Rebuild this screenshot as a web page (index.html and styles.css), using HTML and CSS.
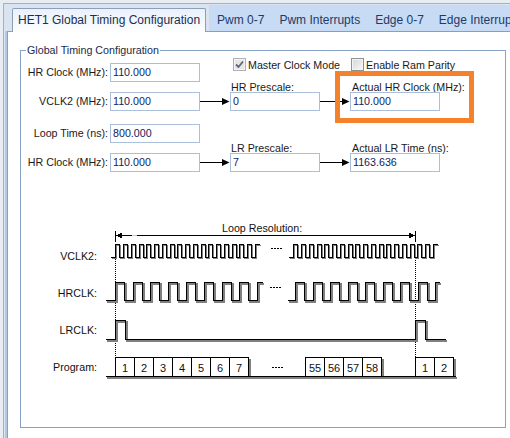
FILE: index.html
```html
<!DOCTYPE html>
<html lang="en">
<head>
    <meta charset="UTF-8">
    <title>HET1 Global Timing Configuration</title>
    <link rel="stylesheet" href="styles.css">
</head>
<body>
    <div class="window">
        <div class="tabs">
            <div class="tab active">HET1 Global Timing Configuration</div>
            <div class="tab">Pwm 0-7</div>
            <div class="tab">Pwm Interrupts</div>
            <div class="tab">Edge 0-7</div>
            <div class="tab">Edge Interrupts</div>
        </div>

        <div class="panel">
            <fieldset class="group">
                <legend>Global Timing Configuration</legend>

                <div class="form-grid">
                    <label class="field-label r1">HR Clock (MHz):</label>
                    <div class="textbox r1 c2">110.000</div>
                    <div class="checks">
                        <span class="check checked">
                            <svg width="11" height="11" viewBox="0 0 11 11"><path d="M2 5.5 L4.5 8 L9 2.5" /></svg>
                        </span>
                        <span class="check-text">Master Clock Mode</span>
                        <span class="check"></span>
                        <span class="check-text">Enable Ram Parity</span>
                    </div>

                    <label class="sub-label r2 c4">HR Prescale:</label>
                    <label class="sub-label wide r2 c6">Actual HR Clock (MHz):</label>

                    <label class="field-label r3">VCLK2 (MHz):</label>
                    <div class="textbox r3 c2">110.000</div>
                    <svg class="arrow r3 c3" width="30" height="19"><path d="M0 9.5 H23" /><polygon points="22,6 29.5,9.5 22,13" /></svg>
                    <div class="textbox r3 c4">0</div>
                    <svg class="arrow r3 c5" width="30" height="19"><path d="M0 9.5 H23" /><polygon points="22,6 29.5,9.5 22,13" /></svg>
                    <div class="textbox r3 c6">110.000</div>

                    <label class="field-label r5">Loop Time (ns):</label>
                    <div class="textbox r5 c2">800.000</div>

                    <label class="sub-label r6 c4">LR Prescale:</label>
                    <label class="sub-label wide r6 c6">Actual LR Time (ns):</label>

                    <label class="field-label r7">HR Clock (MHz):</label>
                    <div class="textbox r7 c2">110.000</div>
                    <svg class="arrow r7 c3" width="30" height="19"><path d="M0 9.5 H23" /><polygon points="22,6 29.5,9.5 22,13" /></svg>
                    <div class="textbox r7 c4">7</div>
                    <svg class="arrow r7 c5" width="30" height="19"><path d="M0 9.5 H23" /><polygon points="22,6 29.5,9.5 22,13" /></svg>
                    <div class="textbox r7 c6">1163.636</div>

                    <div class="highlight"></div>
                </div>

                <!-- timing diagram, drawn in panel coordinates -->
                <svg class="timing" width="483" height="255" viewBox="21 172 483 255" shape-rendering="crispEdges">
                    <defs>
                        <path id="vclk-a" d="M110.5,257.5h5v-13h4v13h4v-13h4v13h4v-13h4v13h4v-13h4v13h3v-13h4v13h4v-13h4v13h4v-13h4v13h4v-13h4v13h3v-13h4v13h4v-13h4v13h4v-13h4v13h4v-13h4v13h3v-13h4v13h4v-13h4v13h4v-13h4v13h4v-13h4v13h3v-13h4v13h4v-13h4v13h4v-13h4" />
                        <path id="vclk-b" d="M288.5,257.5h5v-13h4v13h4v-13h4v13h4v-13h4v13h4v-13h4v13h3v-13h4v13h4v-13h4v13h4v-13h4v13h4v-13h4v13h3v-13h4v13h4v-13h4v13h4v-13h4v13h4v-13h4v13h3v-13h4v13h4v-13h4v13h4v-13h4v13h4v-13h4v13h3v-13h4v13h4v-13h4v13h4v-13h4" />
                        <path id="hrclk-a" d="M105.5,300.5h10v-18h9v18h9v-18h9v18h8v-18h9v18h9v-18h9v18h9v-18h9v18h9v-18h9v18h9v-18h9v18h8v-18h9v18h9v-18h5" />
                        <path id="hrclk-b" d="M287.5,300.5h8v-18h9v18h9v-18h9v18h8v-18h9v18h9v-18h9v18h8v-18h9v18h9v-18h9v18h8v-18h9v18h9v-18h9v18h8v-18h4" />
                        <path id="lrclk" d="M105.5,339.5h10v-19h10v19h290v-19h10v19h20" />
                        <path id="program" d="M105.5,376.5H455.5" />
                    </defs>

                    <!-- loop resolution span -->
                    <text class="caption" x="222" y="232">Loop Resolution:</text>
                    <path class="line" d="M115.5,235.5H415.5 M115.5,231V242 M415.5,231V242" />
                    <path class="line faint" d="M132,235.5h5" />
                    <polygon class="head" points="116,235.5 122,232.5 122,238.5" />
                    <polygon class="head" points="415,235.5 409,232.5 409,238.5" />

                    <path class="dotted" d="M115.5,259V357 M415.5,260V357" />

                    <!-- drop shadows -->
                    <use href="#vclk-a" class="shadow thin" transform="translate(1 1)" />
                    <use href="#vclk-b" class="shadow thin" transform="translate(1 1)" />
                    <use href="#hrclk-a" class="shadow" transform="translate(1.5 1.5)" />
                    <use href="#hrclk-b" class="shadow" transform="translate(1.5 1.5)" />
                    <use href="#lrclk" class="shadow" transform="translate(1.5 1.5)" />
                    <use href="#program" class="shadow" transform="translate(1.5 1.5)" />
                    <rect class="slot-shadow" x="117" y="359" width="134" height="20" />
                    <rect class="slot-shadow" x="307" y="359" width="77" height="20" />
                    <rect class="slot-shadow" x="417" y="359" width="39" height="20" />

                    <use href="#vclk-a" class="wave" />
                    <use href="#vclk-b" class="wave" />
                    <use href="#hrclk-a" class="wave" />
                    <use href="#hrclk-b" class="wave" />
                    <use href="#lrclk" class="wave" />
                    <use href="#program" class="wave" />

                    <path class="dash" d="M271,248.5h11 M270,287.5h11 M272,367.5h11" />

                    <g class="slots">
                        <rect x="115.5" y="357.5" width="19" height="19" />
                        <rect x="134.5" y="357.5" width="19" height="19" />
                        <rect x="153.5" y="357.5" width="19" height="19" />
                        <rect x="172.5" y="357.5" width="19" height="19" />
                        <rect x="191.5" y="357.5" width="19" height="19" />
                        <rect x="210.5" y="357.5" width="19" height="19" />
                        <rect x="229.5" y="357.5" width="19" height="19" />
                        <rect x="305.5" y="357.5" width="19" height="19" />
                        <rect x="324.5" y="357.5" width="19" height="19" />
                        <rect x="343.5" y="357.5" width="19" height="19" />
                        <rect x="362.5" y="357.5" width="19" height="19" />
                        <rect x="415.5" y="357.5" width="19" height="19" />
                        <rect x="434.5" y="357.5" width="19" height="19" />
                    </g>

                    <g class="slot-text">
                        <text x="125" y="372">1</text>
                        <text x="144" y="372">2</text>
                        <text x="163" y="372">3</text>
                        <text x="182" y="372">4</text>
                        <text x="201" y="372">5</text>
                        <text x="220" y="372">6</text>
                        <text x="239" y="372">7</text>
                        <text x="315" y="372">55</text>
                        <text x="334" y="372">56</text>
                        <text x="353" y="372">57</text>
                        <text x="372" y="372">58</text>
                        <text x="425" y="372">1</text>
                        <text x="444" y="372">2</text>
                    </g>

                    <g class="signal-name">
                        <text x="97" y="260">VCLK2:</text>
                        <text x="97" y="297">HRCLK:</text>
                        <text x="97" y="334">LRCLK:</text>
                        <text x="97" y="371">Program:</text>
                    </g>
                </svg>
            </fieldset>
        </div>
    </div>
</body>
</html>
```

FILE: styles.css
```css
body {
    margin: 0;
    background-color: #e8edf3;
    font-family: "Liberation Sans", Arial, sans-serif;
}

.window {
    box-sizing: border-box;
    width: 507px;
    height: 435px;
    margin: 3px 0 0 3px;
    border-top: 1px solid #a1b1c6;
    border-left: 1px solid #a1b1c6;
    background-color: #dae4f1;
    display: flex;
    flex-direction: column;
    overflow: hidden;
}

/* tab strip */

.tabs {
    display: flex;
    align-items: flex-end;
    flex-shrink: 0;
    height: 27px;
    padding-left: 8px;
    white-space: nowrap;
}

.tab {
    box-sizing: border-box;
    height: 26px;
    padding: 8px 7px 0 8px;
    background-color: #c7dbf5;
    color: #1e3a66;
    font-size: 12px;
    line-height: 14px;
}

.tab.active {
    position: relative;
    z-index: 1;
    height: 24px;
    margin-bottom: -1px;
    padding: 4px 5px 0;
    border: 1px solid #8c9fba;
    border-bottom: none;
    border-radius: 2px 2px 0 0;
    background: linear-gradient(#e9f1fb, #fdfeff);
    color: #1b2f52;
}

.tab.active + .tab {
    margin-left: 3px;
}

.panel {
    flex: 1;
    margin-left: 3px;
    border-top: 1px solid #8c9fba;
    border-left: 1px solid #8c9fba;
    background-color: #fff;
    box-shadow: -2px 0 0 #b3c8e4;
}

/* group box */

.group {
    box-sizing: border-box;
    width: 486px;
    min-width: 0;
    margin: 12px 0 0 12px;
    padding: 0;
    border: 1px solid #88a3ca;
}

.group legend {
    margin-left: 5px;
    padding: 0 1px;
    font-size: 10.7px;
    line-height: 13px;
    color: #1b2a47;
}

.form-grid {
    position: relative;
    display: grid;
    grid-template-columns: 89px 90px 30px 90px 30px 90px 1fr;
    grid-template-rows: 25px 10px 19px 13px 19px 10px 19px;
    font-size: 10.7px;
    color: #1a1a1a;
    white-space: nowrap;
}

.r1 { grid-row: 1; }
.r2 { grid-row: 2; }
.r3 { grid-row: 3; }
.r5 { grid-row: 5; }
.r6 { grid-row: 6; }
.r7 { grid-row: 7; }
.c2 { grid-column: 2; }
.c3 { grid-column: 3; }
.c4 { grid-column: 4; }
.c5 { grid-column: 5; }
.c6 { grid-column: 6; }

.field-label {
    grid-column: 1;
    align-self: end;
    padding-right: 2px;
    text-align: right;
    line-height: 19px;
}

.sub-label {
    align-self: end;
    padding-left: 1px;
    line-height: 10px;
}

.sub-label.wide {
    padding-left: 2px;
}

.textbox {
    box-sizing: border-box;
    align-self: end;
    height: 19px;
    padding: 0 2px;
    border: 1px solid #a9bfdc;
    line-height: 17px;
    color: #101c5e;
}

.arrow {
    display: block;
}

.arrow path {
    stroke: #000;
    stroke-width: 1;
}

.arrow polygon {
    fill: #000;
}

.checks {
    grid-row: 1;
    grid-column: 4 / -1;
    align-self: start;
    display: flex;
    align-items: center;
    margin-top: 1px;
    padding-left: 3px;
}

.check {
    box-sizing: border-box;
    width: 13px;
    height: 13px;
    margin-right: 2px;
    border: 1px solid #8e8f8f;
    background: linear-gradient(135deg, #d6d6d6, #f8f8f8);
    box-shadow: inset 0 0 0 1px #f4f4f4;
}

.check.checked {
    border-color: #b1b1b1;
    background: #e6e6e6;
}

.check svg {
    display: block;
}

.check svg path {
    fill: none;
    stroke: #5b6779;
    stroke-width: 1.8;
}

.check-text {
    margin-right: 11px;
}

/* orange call-out over the actual HR clock */
.highlight {
    position: absolute;
    left: 314px;
    top: 14px;
    width: 139px;
    height: 52px;
    box-sizing: border-box;
    border: 5px solid #f5822a;
}

/* timing diagram */

.timing {
    display: block;
    font-family: "Liberation Sans", Arial, sans-serif;
}

.timing text {
    font-size: 10.7px;
    fill: #111;
}

.timing .line {
    fill: none;
    stroke: #000;
}

.timing .line.faint {
    stroke: #c8c8c8;
}

.timing .head {
    fill: #000;
}

.timing .dotted {
    fill: none;
    stroke: #000;
    stroke-dasharray: 1 1;
}

.timing .dash {
    fill: none;
    stroke: #000;
    stroke-dasharray: 2 1;
}

.shadow {
    fill: none;
    stroke: #808080;
    stroke-width: 2;
}

.shadow.thin {
    stroke-width: 1;
}

.wave {
    fill: none;
    stroke: #000;
    stroke-width: 1;
}

.slot-shadow {
    fill: #808080;
}

.slots rect {
    fill: #fff;
    stroke: #000;
}

.slot-text text {
    text-anchor: middle;
    font-size: 11px;
}

.signal-name text {
    text-anchor: end;
}
```
